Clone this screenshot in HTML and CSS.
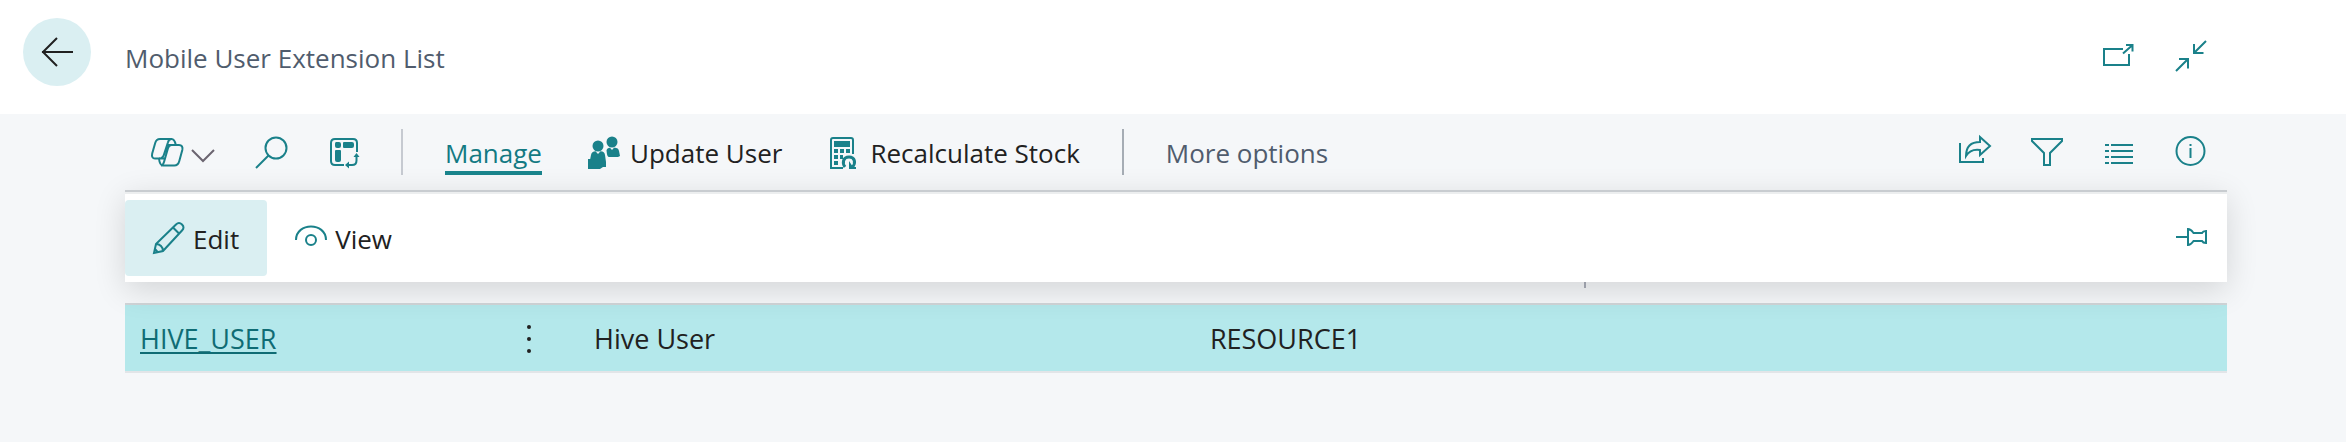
FILE: index.html
```html
<!DOCTYPE html>
<html lang="en">
  <head>
    <meta charset="UTF-8" />
    <meta name="viewport" content="width=device-width, initial-scale=1.0" />
    <title>Mobile User Extension List</title>
    <link rel="stylesheet" href="styles.css">
  </head>
  <body>
    <header class="page-header">
      <button class="back-button" aria-label="Back">
        <svg class="icon" viewBox="0 0 32 32"><path d="M32 16H1M16 2L2 16l14 14" /></svg>
      </button>
      <h1 class="page-title">Mobile User Extension List</h1>
      <div class="icon-group">
        <button class="icon-button" aria-label="Open in new window">
          <svg class="icon" viewBox="0 0 32 32"><path d="M20 9H1v16h25V14M20 13.500l9-8M23 5h6.500v6.500" /></svg>
        </button>
        <button class="icon-button" aria-label="Collapse">
          <svg class="icon" viewBox="0 0 32 32"><path d="M31 1L19 13M19 4v9h9.500M1 31l12-12M4 19h9v9.500" /></svg>
        </button>
      </div>
    </header>

    <main class="content">
      <div class="toolbar">
        <div class="quick-actions">
          <button class="icon-button copilot" aria-label="Copilot">
            <svg class="icon" viewBox="0 0 32 32">
              <path d="M9 3h11.500c2.500 0 3.500 2 4.300 6H28c2.800 0 4 2 3.300 5l-3 11c-.8 3-2.500 4.500-5 4.500H12c-2.500 0-3.500-2-4-7H4c-2.500 0-3.500-2-2.800-5l3-10.500C5 4 6.500 3 9 3z" />
              <path d="M20.500 3c-2 0-3 1-3.600 3.500L12.800 19c-.7 2-2 3.500-4.800 3.500M25 9h-4.500c-2 0-3 1-3.600 3.500L13 26c-.6 2-1.500 3.500-3 3.500M15.500 9H25M8 22.500h6" />
            </svg>
            <svg class="icon chevron" viewBox="0 0 24 14"><path d="M1 1l11 11L23 1" /></svg>
          </button>
          <button class="icon-button" aria-label="Search">
            <svg class="icon" viewBox="0 0 32 32"><circle cx="21" cy="12" r="10.500" /><path d="M13.500 19.500L1 32" /></svg>
          </button>
          <button class="icon-button" aria-label="Personalize">
            <svg class="icon" viewBox="0 0 32 32">
              <path d="M17 29H8c-3 0-4-1-4-4V7c0-3 1-4 4-4h18c3 0 4 1 4 4v9M21 29h4c3 0 4.500-1.500 4.500-4.500V20" />
              <path class="fill" d="M9 6h3a2 2 0 012 2v2a2 2 0 01-2 2h-2a2 2 0 01-2-2V8a2 2 0 011-2zM17 6h8a2 2 0 012 2v2a2 2 0 01-2 2h-8a1 1 0 01-1-1V7a1 1 0 011-1zM9 14h4a1 1 0 011 1v9a2 2 0 01-2 2h-2a2 2 0 01-2-2v-9a1 1 0 011-1zM29.500 17l3 4h-6zM18 29l4-3.500v7z" />
            </svg>
          </button>
        </div>
        <span class="separator"></span>
        <div class="menu">
          <button class="menu-item active">Manage</button>
          <button class="menu-item">
            <svg class="icon" viewBox="0 0 32 32">
              <path class="fill" d="M2 32v-9l1-5c.5-2.500 2-3.500 4.500-3.700L10 17l2.500-2.700c3 .2 4 1 4.500 3.700l1 7v5h-3l-3 2z" />
              <circle class="fill" cx="10" cy="9" r="5.500" />
              <path class="fill" d="M18.500 13.500c.5-2 1.500-2.500 3.500-2.800l2 2.300 2-2.300c3.500.2 4.500 1 5 3.300l1 5-2 1h-9c-2 0-2.200-4.500-2.500-6.500z" />
              <circle class="fill" cx="24" cy="5" r="5.500" />
              <path class="fill" d="M0 22h3v10H0z" />
            </svg>
            Update User
          </button>
          <button class="menu-item">
            <svg class="icon" viewBox="0 0 32 32">
              <path d="M15 31H3V3c0-1.500.5-2 2-2h18c1.500 0 2 .5 2 2v14" />
              <path class="fill" d="M6 4h16v6H6zM6 12h4v4H6zM12 12h4v4h-4zM18 12h4v4h-4zM6 18h4v4H6zM12 18h3v4h-3zM6 24h4v4H6zM21 24v8h7v-2h-3z" />
              <path class="thick" d="M17 30c-3-4-2-10 4-10s7 6 3.500 10" />
            </svg>
            Recalculate Stock
          </button>
        </div>
        <span class="separator dark"></span>
        <button class="menu-item muted">More options</button>

        <div class="icon-group">
          <button class="icon-button" aria-label="Share">
            <svg class="icon" viewBox="0 0 32 32"><path d="M1 7v19h23v-4M21 6V1l10 9-10 9v-5c-7-1-11 1-14 6 0-8 4-14 14-14z" /></svg>
          </button>
          <button class="icon-button" aria-label="Filter">
            <svg class="icon" viewBox="0 0 32 32"><path d="M1 3h30v2L19 17v12h-6V17L1 5z" /></svg>
          </button>
          <button class="icon-button" aria-label="List">
            <svg class="icon" viewBox="0 0 32 32"><path d="M2 9h4M8 9h22M2 15h4M8 15h22M2 21h4M8 21h22M2 27h4M8 27h22" /></svg>
          </button>
          <button class="icon-button" aria-label="Details">
            <svg class="icon" viewBox="0 0 32 32"><circle cx="15.500" cy="15" r="14" /><path d="M15.500 12v10M15.500 8v2" /></svg>
          </button>
        </div>
      </div>

      <div class="action-panel">
        <button class="action selected">
          <svg class="icon" viewBox="0 0 32 32"><path d="M1 31l2-9L23 2.500c2-2 4-2 6 0s2 4 0 6L10 29zM20 5.500l6.500 6.500M3 22c4 0 7 3 7 7M2 27l3 3.500" /></svg>
          <span>Edit</span>
        </button>
        <button class="action">
          <svg class="icon" viewBox="0 0 32 32"><path d="M1 18C1 0 31 0 31 18" /><circle cx="16" cy="18" r="5" /></svg>
          <span>View</span>
        </button>
        <button class="icon-button pin" aria-label="Pin">
          <svg class="icon" viewBox="0 0 32 32"><path d="M1 15h12M13 7v16c3 0 4-2 5.500-4H27c1 2 2 2 4 2V9c-2 0-3 0-4 2h-8.500C17 9 16 7 13 7z" /></svg>
        </button>
      </div>

      <table class="list">
        <colgroup>
          <col class="col-user">
          <col class="col-menu">
          <col class="col-name">
          <col class="col-resource">
          <col>
        </colgroup>
        <thead>
          <tr>
            <th></th>
            <th></th>
            <th></th>
            <th><span class="resizer"></span></th>
            <th></th>
          </tr>
        </thead>
        <tbody>
          <tr>
            <td><a href="#">HIVE_USER</a></td>
            <td>
              <button class="row-menu" aria-label="Show more options">
                <svg class="dots" viewBox="0 0 4 28"><circle cx="2" cy="2" r="2" /><circle cx="2" cy="14" r="2" /><circle cx="2" cy="26" r="2" /></svg>
              </button>
            </td>
            <td>Hive User</td>
            <td>RESOURCE1</td>
            <td></td>
          </tr>
        </tbody>
      </table>
    </main>
  </body>
</html>
```
FILE: styles.css
```css
* {
  box-sizing: border-box;
}

body {
  margin: 0;
  background-color: #f5f7f9;
  color: #212121;
  font-family: "Open Sans", "Segoe UI", sans-serif;
  font-size: 26px;
  line-height: 38px;
}

button {
  padding: 0;
  border: none;
  background: none;
  color: inherit;
  font: inherit;
  cursor: pointer;
}

.icon {
  display: block;
  flex: none;
  width: 32px;
  height: 32px;
  overflow: visible;
  fill: none;
  stroke: #1a818a;
  stroke-width: 2;
}

.icon .fill {
  fill: #1a818a;
  stroke: none;
}

.icon .thick {
  stroke-width: 3;
}

.page-header {
  display: flex;
  align-items: center;
  height: 114px;
  padding: 0 139px 0 23px;
  background-color: #fff;
}

.back-button {
  display: grid;
  place-items: center;
  align-self: flex-start;
  width: 68px;
  height: 68px;
  margin-top: 18px;
  border-radius: 50%;
  background-color: #daeff2;
}

.back-button .icon {
  stroke: #212121;
}

.page-title {
  margin: 0 0 0 34px;
  padding-top: 2px;
  color: #505c6d;
  font-size: 26px;
  font-weight: 400;
}

.icon-group {
  display: flex;
  gap: 40px;
  margin-left: auto;
}

.page-header .icon-group {
  padding-bottom: 2px;
}

.content {
  margin: 0 119px 0 125px;
}

.toolbar {
  display: flex;
  align-items: center;
  gap: 42px;
  height: 76px;
  padding: 0 20px 0 26px;
}

.quick-actions {
  display: flex;
  align-items: center;
  gap: 40px;
}

.copilot {
  display: flex;
  align-items: center;
  gap: 8px;
}

.icon.chevron {
  width: 24px;
  height: 14px;
  margin-top: 8px;
  stroke: #6b6570;
}

.separator {
  width: 2px;
  height: 46px;
  background-color: #c6cad1;
}

.separator.dark {
  background-color: #a6adb5;
}

.menu {
  display: flex;
  align-items: center;
  gap: 46px;
}

.menu-item {
  display: flex;
  align-items: center;
  gap: 10px;
  border-top: 6px solid transparent;
  border-bottom: 4px solid transparent;
  line-height: 36px;
  white-space: nowrap;
}

.menu-item.active {
  border-bottom-color: #1a858d;
  color: #137a83;
}

.menu-item.muted {
  color: #505c6d;
}

.action-panel {
  position: relative;
  display: flex;
  align-items: center;
  height: 92px;
  padding: 8px 20px 6px 0;
  border-top: 2px solid #c8ccd0;
  background: linear-gradient(#eceeef 2px, #fff 2px);
  box-shadow: 0 8px 32px rgba(0, 0, 0, 0.14);
}

.action {
  display: flex;
  align-items: center;
  gap: 8px;
  height: 76px;
  padding: 0 28px;
  border-radius: 4px;
}

.action span {
  padding-top: 2px;
}

.action.selected {
  background-color: #daeff2;
}

.pin {
  margin-left: auto;
}

.list {
  width: 100%;
  table-layout: fixed;
  border-collapse: collapse;
}

.col-user {
  width: 16.8%;
}

.col-menu {
  width: 4.8%;
}

.col-name {
  width: 29.3%;
}

.col-resource {
  width: 18.6%;
}

.list th {
  height: 22px;
  padding: 0;
  vertical-align: top;
}

.resizer {
  display: block;
  width: 2px;
  height: 6px;
  margin-left: auto;
  background-color: #a9adb8;
}

.list td {
  height: 68px;
  padding: 2px 15px 0;
  border-top: 2px solid #d0d5d8;
  border-bottom: 2px solid #e2e5e8;
  background-color: #b4e8eb;
  font-size: 27px;
}

.list a {
  color: #0f6c74;
  text-decoration-thickness: 2px;
  text-underline-offset: 3px;
}

.row-menu {
  display: block;
  margin: 0 auto;
  padding: 4px 14px;
}

.dots {
  display: block;
  width: 4px;
  height: 28px;
  fill: #212121;
}
```
